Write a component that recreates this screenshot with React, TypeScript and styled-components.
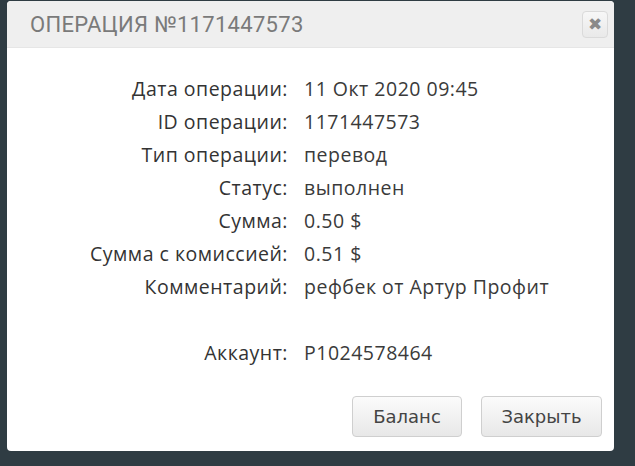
import React from 'react';
import styled, { createGlobalStyle } from 'styled-components';

const GlobalStyle = createGlobalStyle`
  html, body {
    margin: 0;
    padding: 0;
    background: #2f3c43;
  }
  body {
    padding: 1px 0 0 7px;
    height: 466px;
    box-sizing: border-box;
    overflow: hidden;
  }
`;

const Dialog = styled.div`
  width: 607px;
  height: 450px;
  background: #ffffff;
  border-radius: 4px;
  overflow: hidden;
  display: flex;
  flex-direction: column;
`;

const Header = styled.div`
  height: 46px;
  background: #efefef;
  border-bottom: 1px solid #e6e6e6;
  display: flex;
  align-items: center;
  justify-content: space-between;
  padding: 0 6px 0 23px;
`;

const Title = styled.h1`
  margin: 0;
  font-family: Roboto, "Liberation Sans", sans-serif;
  font-weight: 400;
  font-size: 22px;
  letter-spacing: 0.3px;
  color: #7a7a7a;
  text-transform: uppercase;
`;

const CloseButton = styled.button`
  width: 26px;
  height: 27px;
  padding: 0;
  border: 1px solid #dadada;
  border-radius: 4px;
  background: linear-gradient(#f7f7f7, #e9e9e9);
  color: #8a8a8a;
  font-size: 17px;
  line-height: 1;
  display: flex;
  align-items: center;
  justify-content: center;
  cursor: pointer;
`;

const Body = styled.div`
  flex: 1;
  padding: 24px 0 0;
`;

const InfoGrid = styled.dl`
  margin: 0;
  display: grid;
  grid-template-columns: 281px 1fr;
  column-gap: 16px;
  grid-auto-rows: 33px;
  align-items: center;
  font-family: "Open Sans", "Noto Sans", sans-serif;
  font-size: 19.5px;
  letter-spacing: 0.5px;
  color: #333;
`;

const Label = styled.dt`
  text-align: right;
  margin: 0;
`;

const Value = styled.dd`
  margin: 0;
  color: #3a3a3a;
`;

const Spacer = styled.div`
  grid-column: 1 / -1;
`;

const Footer = styled.div`
  display: flex;
  justify-content: flex-end;
  gap: 19px;
  padding: 0 12px 14px 0;
`;

const Button = styled.button<{ $width: number }>`
  width: ${({ $width }) => $width}px;
  height: 41px;
  border: 1px solid #cfcfcf;
  border-radius: 4px;
  background: linear-gradient(#fbfbfb, #e8e8e8);
  font-family: "DejaVu Sans", Verdana, sans-serif;
  font-size: 18px;
  color: #444;
  cursor: pointer;
`;

const rows: [string, string][] = [
  ['Дата операции:', '11 Окт 2020 09:45'],
  ['ID операции:', '1171447573'],
  ['Тип операции:', 'перевод'],
  ['Статус:', 'выполнен'],
  ['Сумма:', '0.50 $'],
  ['Сумма с комиссией:', '0.51 $'],
  ['Комментарий:', 'рефбек от Артур Профит'],
];

export default function App() {
  return (
    <>
      <GlobalStyle />
      <Dialog>
        <Header>
          <Title>Операция №1171447573</Title>
          <CloseButton aria-label="close">✖</CloseButton>
        </Header>
        <Body>
          <InfoGrid>
            {rows.map(([label, value]) => (
              <React.Fragment key={label}>
                <Label>{label}</Label>
                <Value>{value}</Value>
              </React.Fragment>
            ))}
            <Spacer />
            <Label>Аккаунт:</Label>
            <Value>P1024578464</Value>
          </InfoGrid>
        </Body>
        <Footer>
          <Button $width={110}>Баланс</Button>
          <Button $width={121}>Закрыть</Button>
        </Footer>
      </Dialog>
    </>
  );
}
